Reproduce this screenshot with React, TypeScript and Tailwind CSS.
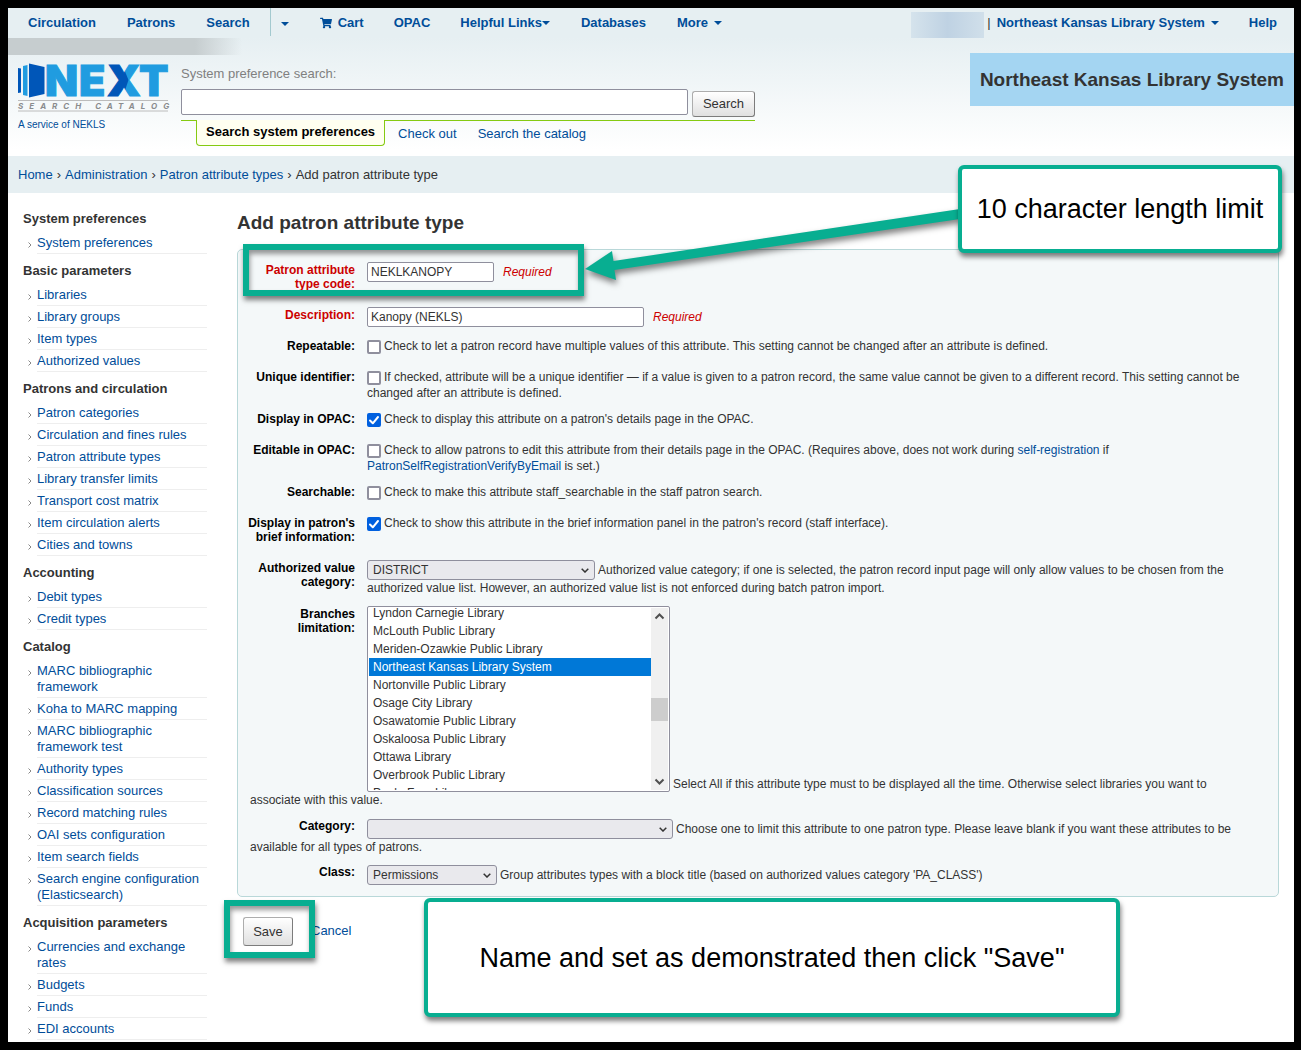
import { useLayoutEffect, useRef, type ReactNode } from "react";
import { FaShoppingCart } from "react-icons/fa";

const sections = [
  { title: "System preferences", links: ["System preferences"] },
  {
    title: "Basic parameters",
    links: ["Libraries", "Library groups", "Item types", "Authorized values"],
  },
  {
    title: "Patrons and circulation",
    links: [
      "Patron categories",
      "Circulation and fines rules",
      "Patron attribute types",
      "Library transfer limits",
      "Transport cost matrix",
      "Item circulation alerts",
      "Cities and towns",
    ],
  },
  { title: "Accounting", links: ["Debit types", "Credit types"] },
  {
    title: "Catalog",
    links: [
      "MARC bibliographic framework",
      "Koha to MARC mapping",
      "MARC bibliographic framework test",
      "Authority types",
      "Classification sources",
      "Record matching rules",
      "OAI sets configuration",
      "Item search fields",
      "Search engine configuration (Elasticsearch)",
    ],
  },
  {
    title: "Acquisition parameters",
    links: ["Currencies and exchange rates", "Budgets", "Funds", "EDI accounts"],
  },
];

const branches = [
  "Lyndon Carnegie Library",
  "McLouth Public Library",
  "Meriden-Ozawkie Public Library",
  "Northeast Kansas Library System",
  "Nortonville Public Library",
  "Osage City Library",
  "Osawatomie Public Library",
  "Oskaloosa Public Library",
  "Ottawa Library",
  "Overbrook Public Library",
  "Paola Free Library",
];

function Caret() {
  return (
    <svg className="inline-block h-1 w-2" viewBox="0 0 8 4" aria-hidden="true">
      <path d="M0 0h8L4 4z" fill="#004d99" />
    </svg>
  );
}

function Logo() {
  return (
    <svg className="block h-[50px] w-[152px] overflow-visible" viewBox="0 0 152 50" role="img" aria-label="NEXT Search Catalog">
      <defs>
        <pattern id="x-fill" patternUnits="userSpaceOnUse" x="80" y="-10" width="50" height="60">
          <rect width="50" height="60" fill="#209ce0" />
          <path d="M0 0H19.500L30.500 27L19.500 60H0z" fill="#0056b8" />
        </pattern>
      </defs>
      <path d="M0 5l3 .6v23.800L0 30z" fill="#0056b8" />
      <path d="M5 3l4.500-1v31L5 32z" fill="#209ce0" />
      <path d="M11 .5L26.500 4v27L11 34.500z" fill="#0056b8" />
      <g fontFamily="Inter, sans-serif" fontWeight="900" fontSize="43" fill="#209ce0" stroke="#209ce0" strokeWidth="1">
        <text x="27" y="32.500">N</text>
        <text x="61" y="32.500">E</text>
        <text x="89" y="32.500" fill="url(#x-fill)" stroke="url(#x-fill)">X</text>
        <text x="121" y="32.500">T</text>
      </g>
      <path d="M0 37.500h150M0 48h150" stroke="#bcbcbc" />
      <text x="0" y="46" fontFamily="Inter, sans-serif" fontSize="8" fontWeight="700" fontStyle="italic" fill="#8a8c8e" className="tracking-[6px]">
        SEARCH CATALOG
      </text>
    </svg>
  );
}

function Row({ label, id, required, children }: { label: string; id: string; required?: boolean; children: ReactNode }) {
  return (
    <li className="mb-[10px] flex min-h-[21px] gap-3">
      <label
        htmlFor={id}
        className={`-ml-1 w-[109px] shrink-0 pt-px text-right leading-[14px] font-bold ${required ? "text-[#cc0000]" : "text-black"}`}
      >
        {label}
      </label>
      <div className="min-w-0 flex-1">{children}</div>
    </li>
  );
}

function Check({ id, checked }: { id: string; checked?: boolean }) {
  return (
    <span className="relative mr-[3px] inline-block h-[14px] w-[14px] align-middle">
      <input
        id={id}
        type="checkbox"
        defaultChecked={checked}
        className="peer absolute inset-0 h-[14px] w-[14px] appearance-none rounded-[2px] border-2 border-[#8f8f9d] bg-white checked:border-[#0060df] checked:bg-[#0060df]"
      />
      <svg viewBox="0 0 14 14" className="pointer-events-none absolute inset-0 hidden h-[14px] w-[14px] peer-checked:block">
        <path d="M3 7.500l2.800 2.800L11 4" fill="none" stroke="#fff" strokeWidth="2" strokeLinecap="round" strokeLinejoin="round" />
      </svg>
    </span>
  );
}

function Drop({ id, width, value }: { id: string; width: string; value: string }) {
  return (
    <span className={`relative mr-[3px] inline-block h-5 align-top ${width}`}>
      <select
        id={id}
        className="block h-5 w-full appearance-none rounded-[3px] border border-[#8f8f9d] bg-[#e9e9ed] pl-[5px] text-xs text-[#333]"
      >
        <option>{value}</option>
      </select>
      <svg viewBox="0 0 8 5" className="pointer-events-none absolute top-2 right-[6px] h-[5px] w-2">
        <path d="M.7.7L4 4L7.300.7" fill="none" stroke="#333" strokeWidth="1.500" />
      </svg>
    </span>
  );
}

function BranchList() {
  const ref = useRef<HTMLSelectElement>(null);
  useLayoutEffect(() => {
    if (ref.current) ref.current.scrollTop = 4;
  }, []);
  return (
    <span className="mr-[3px] inline-flex h-[186px] w-[303px] rounded-[2px] border border-[#8f8f9d] bg-white p-px align-bottom">
      <select
        id="branches"
        ref={ref}
        multiple
        size={10}
        defaultValue={["Northeast Kansas Library System"]}
        className="h-[182px] min-w-0 flex-1 overflow-y-scroll bg-white text-xs text-[#333] outline-none [scrollbar-width:none]"
      >
        {branches.map((b) => (
          <option
            key={b}
            className="h-[18px] min-h-[18px] px-1 pt-[2px] pb-0 checked:bg-[#0078d7] checked:bg-[linear-gradient(#0078d7,#0078d7)] checked:text-white"
          >
            {b}
          </option>
        ))}
      </select>
      <span className="flex h-[182px] w-[17px] flex-col items-center bg-[#f0f0f0]" aria-hidden="true">
        <svg viewBox="0 0 17 17" className="h-[17px] w-[17px]">
          <path d="M4.500 10.500l4-4 4 4" fill="none" stroke="#505050" strokeWidth="2" />
        </svg>
        <span className="mt-[73px] h-[23px] w-[17px] bg-[#cdcdcd]" />
        <svg viewBox="0 0 17 17" className="mt-auto h-[17px] w-[17px]">
          <path d="M4.500 6.500l4 4 4-4" fill="none" stroke="#505050" strokeWidth="2" />
        </svg>
      </span>
    </span>
  );
}

const buttonLook =
  "rounded-[3px] border border-[#adadad] border-r-[#7c7c7c] border-b-[#7c7c7c] bg-linear-to-b from-white to-[#e0e0e0] text-[13px] text-[#333]";
const fieldLook = "h-5 rounded-[2px] border border-[#8f8f9d] bg-white px-[3px] text-xs text-[#333]";

export default function App() {
  return (
    <div className="relative min-h-screen border-8 border-r-[7px] border-black bg-white font-['Liberation_Sans',Arial,sans-serif] text-[13px] leading-4 text-[#333] [&_a]:text-[#004d99]">
      <header className="h-[148px] bg-[linear-gradient(#e6eff2_20%,#fff_96%)]">
        <nav className="flex h-[30px] items-start justify-between font-bold">
          <div className="flex h-[30px] items-center pl-5">
            <a href="#circ">Circulation</a>
            <a href="#patrons" className="ml-[31px]">Patrons</a>
            <a href="#search" className="ml-[31px]">Search</a>
            <button aria-label="More search options" className="mb-[2px] ml-5 flex h-7 items-center border-l border-[#a3c9cf] pt-[3px] pl-[10px]">
              <Caret />
            </button>
            <a href="#cart" className="ml-[31px] flex items-center gap-[6px]">
              <FaShoppingCart className="h-3 w-3" />Cart
            </a>
            <a href="#opac" className="ml-[30px]">OPAC</a>
            <a href="#links" className="ml-[30px] flex items-center">Helpful Links<Caret /></a>
            <a href="#databases" className="ml-[31px]">Databases</a>
            <a href="#more" className="ml-[31px] flex items-center gap-[6px]">More <Caret /></a>
          </div>
          <div className="flex h-[30px] items-center pr-[17px]">
            <span className="mt-1 h-[26px] w-[73px] bg-linear-to-r from-[#d5e3ec] via-[#bfd2e3] to-[#d0dfea]" />
            <span className="ml-[3px] font-normal">|</span>
            <a href="#branch" className="ml-[6px] flex items-center gap-[6px]">
              Northeast Kansas Library System <Caret />
            </a>
            <a href="#help" className="ml-[30px]">Help</a>
          </div>
        </nav>
        <div className="flex items-start">
          <div className="relative w-[173px] shrink-0 pt-[25px] pl-[10px]">
            <span className="absolute top-0 left-0 h-[17px] w-[234px] bg-linear-to-r from-[#c6cdcf] from-80% to-transparent" />
            <Logo />
            <a href="#nekls" className="mt-1 block text-[10px]">A service of NEKLS</a>
          </div>
          <form className="w-[574px] shrink-0 pt-7" onSubmit={(e) => e.preventDefault()}>
            <label htmlFor="q" className="block text-[#808080]">System preference search:</label>
            <div className="mt-[7px] flex gap-1">
              <input id="q" type="text" className="h-[26px] w-[507px] rounded-[2px] border border-[#8f8f9d] bg-white px-1" />
              <button className={`mt-[2px] h-[26px] w-[63px] ${buttonLook}`}>Search</button>
            </div>
            <div className="mt-[3px] flex border-t border-[#85ca11] pl-[15px]">
              <a href="#sysprefs" className="-mt-px h-[26px] rounded-b-[4px] border border-t-0 border-[#85ca11] bg-[#fffff0] px-[9px] pt-1 font-bold">
                <span className="text-black">Search system preferences</span>
              </a>
              <a href="#checkout" className="pt-[5px] pl-[13px]">Check out</a>
              <a href="#catalog" className="pt-[5px] pl-[21px]">Search the catalog</a>
            </div>
          </form>
          <div className="mt-[15px] ml-auto flex h-[53px] items-center bg-[#a4d5f2] px-[10px] text-[19px] font-bold">
            Northeast Kansas Library System
          </div>
        </div>
      </header>

      <nav aria-label="Breadcrumb" className="flex h-[37px] items-center gap-1 bg-[#e6eff2] pl-[10px]">
        <a href="#home">Home</a>›<a href="#admin">Administration</a>›<a href="#types">Patron attribute types</a>›
        <span>Add patron attribute type</span>
      </nav>

      <div className="flex items-start">
        <aside className="mr-[30px] ml-[15px] w-[184px] shrink-0 pt-[18px] pb-[2px]">
          {sections.map((s) => (
            <section key={s.title} className="mb-[9px] last:mb-0">
              <h2 className="mb-[5px] font-bold">{s.title}</h2>
              <ul className="pl-[14px]">
                {s.links.map((l) => (
                  <li key={l} className="relative border-b border-[#eee] pt-[3px] pb-[2px]">
                    <svg viewBox="0 0 4 6" className="absolute top-[10px] -left-[9px] h-[6px] w-1" aria-hidden="true">
                      <path d="M.5.5L3 3L.5 5.500" fill="none" stroke="#888" />
                    </svg>
                    <a href="#item">{l}</a>
                  </li>
                ))}
              </ul>
            </section>
          ))}
        </aside>

        <main className="mr-[15px] min-w-0 flex-1 pt-[18px]">
          <h1 className="mb-[14px] text-[19px] leading-6 font-bold">Add patron attribute type</h1>
          <form onSubmit={(e) => e.preventDefault()}>
            <div className="relative rounded-[5px] border border-[#b9d8d9] bg-[#f4f8f9] px-3 pt-3 text-xs leading-4">
              <div className="pointer-events-none absolute -top-[6px] left-[5px] h-[52px] w-[341px] border-6 border-[#08ae91] shadow-[1px_4px_5px_rgba(0,0,0,0.5),inset_1px_4px_5px_rgba(0,0,0,0.4)]" />
              <ol>
                <Row label="Patron attribute type code:" id="code" required>
                  <div className="flex h-[35px] items-start gap-[9px]">
                    <input id="code" defaultValue="NEKLKANOPY" className={`w-[127px] ${fieldLook}`} />
                    <em className="leading-5 text-[#cc0000]">Required</em>
                  </div>
                </Row>
                <Row label="Description:" id="desc" required>
                  <div className="flex items-start gap-[9px]">
                    <input id="desc" defaultValue="Kanopy (NEKLS)" className={`w-[277px] ${fieldLook}`} />
                    <em className="leading-5 text-[#cc0000]">Required</em>
                  </div>
                </Row>
                <Row label="Repeatable:" id="repeatable">
                  <Check id="repeatable" />
                  Check to let a patron record have multiple values of this attribute. This setting cannot be changed after an attribute is defined.
                </Row>
                <Row label="Unique identifier:" id="unique">
                  <Check id="unique" />
                  If checked, attribute will be a unique identifier — if a value is given to a patron record, the same value cannot be given to a different record. This setting cannot be changed after an attribute is defined.
                </Row>
                <Row label="Display in OPAC:" id="opac">
                  <Check id="opac" checked />
                  Check to display this attribute on a patron's details page in the OPAC.
                </Row>
                <Row label="Editable in OPAC:" id="editable">
                  <Check id="editable" />
                  Check to allow patrons to edit this attribute from their details page in the OPAC. (Requires above, does not work during{" "}
                  <a href="#self">self-registration</a> if <a href="#verify" className="inline-block">PatronSelfRegistrationVerifyByEmail</a> is set.)
                </Row>
                <Row label="Searchable:" id="searchable">
                  <Check id="searchable" />
                  Check to make this attribute staff_searchable in the staff patron search.
                </Row>
                <Row label="Display in patron's brief information:" id="brief">
                  <div className="h-[35px]">
                    <Check id="brief" checked />
                    Check to show this attribute in the brief information panel in the patron's record (staff interface).
                  </div>
                </Row>
                <Row label="Authorized value category:" id="avc">
                  <Drop id="avc" width="w-[228px]" value="DISTRICT" />
                  <span className="leading-5">Authorized value category; if one is selected, the patron record input page will only allow values to be chosen from the </span>
                  authorized value list. However, an authorized value list is not enforced during batch patron import.
                </Row>
                <li className="mb-[10px] min-h-[203px] pr-4">
                  <label htmlFor="branches" className="float-left mr-3 w-[105px] pt-px text-right leading-[14px] font-bold text-black">
                    Branches limitation:
                  </label>
                  <BranchList />
                  Select All if this attribute type must to be displayed all the time. Otherwise select libraries you want to associate with this value.
                </li>
                <li className="mb-[10px]">
                  <label htmlFor="category" className="float-left mr-3 w-[105px] text-right leading-[14px] font-bold text-black">
                    Category:
                  </label>
                  <Drop id="category" width="w-[306px]" value="" />
                  <span className="leading-5">Choose one to limit this attribute to one patron type. Please leave blank if you want these attributes to be </span>
                  available for all types of patrons.
                </li>
                <li className="mb-[10px] min-h-[21px]">
                  <label htmlFor="class" className="float-left mr-3 w-[105px] text-right leading-[14px] font-bold text-black">
                    Class:
                  </label>
                  <Drop id="class" width="w-[130px]" value="Permissions" />
                  <span className="leading-5">Group attributes types with a block title (based on authorized values category 'PA_CLASS')</span>
                </li>
              </ol>
            </div>
            <div className="relative mt-5 flex items-center gap-[18px] pl-[6px]">
              <button className={`h-[29px] w-[50px] ${buttonLook}`}>Save</button>
              <a href="#cancel" className="-mt-[2px]">Cancel</a>
              <div className="pointer-events-none absolute -top-[17px] -left-[13px] h-[58px] w-[91px] border-6 border-[#08ae91] shadow-[1px_4px_5px_rgba(0,0,0,0.5),inset_1px_4px_5px_rgba(0,0,0,0.4)]" />
            </div>
          </form>
        </main>
      </div>

      <svg
        className="pointer-events-none absolute top-[192px] left-[572px] h-[90px] w-[390px] drop-shadow-[1px_4px_3px_rgba(0,0,0,0.5)]"
        viewBox="0 0 390 90"
        aria-hidden="true"
      >
        <path d="M5 69L32 51L33.500 61L380 9V19L34.500 70L36 80z" fill="#08ae91" />
      </svg>
      <div className="absolute top-[157px] left-[950px] flex h-[88px] w-[324px] items-center justify-center rounded-[6px] border-4 border-[#08ae91] bg-white text-[27px] leading-8 text-black shadow-[1px_4px_5px_rgba(0,0,0,0.5)]">
        10 character length limit
      </div>
      <div className="absolute top-[890px] left-[416px] flex h-[119px] w-[696px] items-center justify-center rounded-[6px] border-4 border-[#08ae91] bg-white text-[27px] leading-8 text-black shadow-[1px_4px_5px_rgba(0,0,0,0.5)]">
        Name and set as demonstrated then click "Save"
      </div>
    </div>
  );
}
